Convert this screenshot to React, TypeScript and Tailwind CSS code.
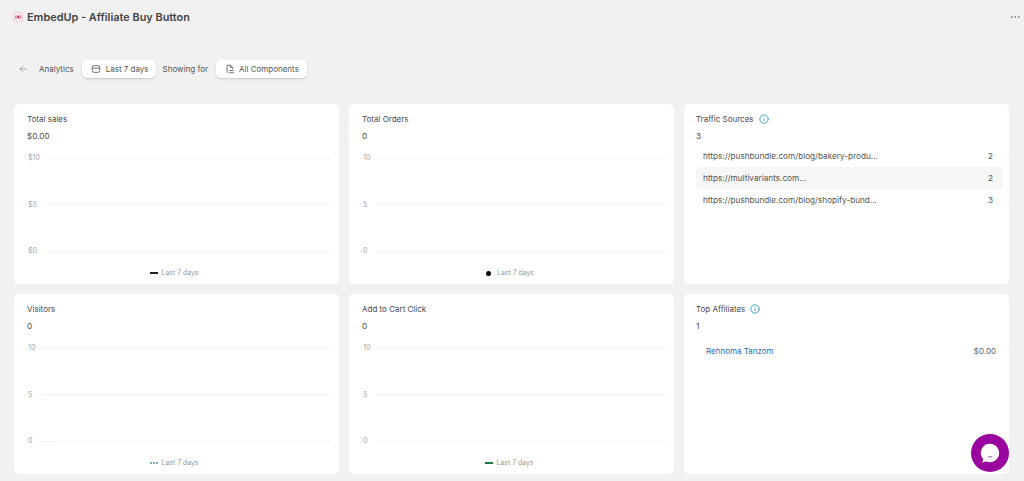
import { ArrowLeft, Info, MoreHorizontal } from 'lucide-react';

const font = { fontFamily: 'Inter, sans-serif' };

const ChartCard = ({
  title,
  value,
  ticks,
  legend,
  labelWidth,
}: {
  title: string;
  value: string;
  ticks: string[];
  legend: React.ReactNode;
  labelWidth: string;
}) => (
  <div className="bg-white rounded-[5px] h-[180px] pt-[9px] pl-[13px] pr-[6px]">
    <div className="text-[8px] leading-[12px] text-[#4a4a4a]">{title}</div>
    <div className="mt-[5px] text-[8.2px] leading-[12px] text-[#4a4a4a]">{value}</div>
    <div className="flex flex-col h-[105px] justify-between mt-[10px]">
      {ticks.map((t) => (
        <div key={t} className="flex items-center h-[12px] -ml-[2px]">
          <span className="w-[2px] h-px bg-[#eeeeee] mr-[1px]" />
          <span className={`text-[7.2px] leading-[12px] text-[#a8a8a8] ${labelWidth}`}>{t}</span>
          <span className="flex-1 h-px bg-[#f5f5f5] ml-[4px]" />
        </div>
      ))}
    </div>
    <div className="mt-[10px] pr-[12px] flex items-center justify-center gap-[4px] text-[6.9px] leading-[12px] text-[#9a9a9a]">
      {legend}
      <span>Last 7 days</span>
    </div>
  </div>
);

const InfoTitle = ({ title }: { title: string }) => (
  <div className="flex items-center gap-[5px] text-[8px] leading-[12px] text-[#4a4a4a]">
    {title}
    <Info className="w-[10px] h-[10px] text-[#2b9cc4]" strokeWidth={2.2} />
  </div>
);

const sources = [
  { url: 'https://pushbundle.com/blog/bakery-produ...', count: 2 },
  { url: 'https://multivariants.com...', count: 2, active: true },
  { url: 'https://pushbundle.com/blog/shopify-bund...', count: 3 },
];

export default function App() {
  return (
    <div className="w-[1024px] h-[481px] overflow-hidden bg-[#f1f1f1] flex flex-col relative" style={font}>
      <header className="h-[35px] shrink-0 border-b border-[#ececec] flex items-center justify-between pl-[13px] pr-[3px]">
        <div className="flex items-center gap-[4px]">
          <svg viewBox="0 0 10 10" className="w-[10px] h-[10px]" fill="none">
            <rect x="0.4" y="0.4" width="9.2" height="9.2" rx="1.5" fill="#fdeaee" stroke="#f6c9d2" strokeWidth="0.8" />
            <path d="M3.2 3Q2 5 3.2 7M6.8 3Q8 5 6.8 7" stroke="#d8345a" strokeWidth="0.8" />
            <circle cx="5" cy="5" r="1.2" fill="#d8345a" />
          </svg>
          <h1 className="text-[10.9px] leading-[14px] font-semibold text-[#444444]">EmbedUp - Affiliate Buy Button</h1>
        </div>
        <MoreHorizontal className="w-[12px] h-[12px] text-[#8a8a8a]" />
      </header>

      <div className="flex items-center h-[20px] mt-[24px] pl-[18px] text-[8px] text-[#555555]">
        <ArrowLeft className="w-[10px] h-[10px] text-[#9a9a9a]" />
        <span className="ml-[11px]">Analytics</span>
        <button className="ml-[8px] h-[18px] pl-[9px] pr-[7px] bg-white rounded-[5px] shadow-[0_1px_2px_rgba(0,0,0,0.18)] flex items-center gap-[5px] text-[8px] text-[#555555]">
          <svg viewBox="0 0 12 12" className="w-[10px] h-[10px]" fill="none" stroke="currentColor" strokeWidth="1">
            <rect x="1.5" y="2" width="9" height="8" rx="2" />
            <path d="M1.5 5H10.5" />
          </svg>
          Last 7 days
        </button>
        <span className="ml-[7px]">Showing for</span>
        <button className="ml-[8px] h-[18px] pl-[9px] pr-[8px] bg-white rounded-[5px] shadow-[0_1px_2px_rgba(0,0,0,0.18)] flex items-center gap-[4px] text-[8px] text-[#555555]">
          <svg viewBox="0 0 12 12" className="w-[10px] h-[10px]" fill="none" stroke="currentColor" strokeWidth="1">
            <path d="M2.5 10.5V1.5H6.5L9 4V6M6.5 1.5V4H9M5 8H10.5M5 10.5H10.5" />
          </svg>
          All Components
        </button>
      </div>

      <main className="grid grid-cols-[325px_325px_325px] grid-rows-[180px_180px] gap-[10px] mt-[25px] pl-[14px]">
        <ChartCard
          title="Total sales"
          value="$0.00"
          ticks={['$10', '$5', '$0']}
          labelWidth="w-[12px]"
          legend={<span className="w-[8px] h-[2px] bg-[#222222]" />}
        />
        <ChartCard
          title="Total Orders"
          value="0"
          ticks={['10', '5', '0']}
          labelWidth="w-[9px]"
          legend={<span className="w-[5px] h-[5px] rounded-full bg-black mx-[2px]" />}
        />
        <div className="bg-white rounded-[5px] h-[180px] pt-[9px] pl-[12px] pr-[6px]">
          <InfoTitle title="Traffic Sources" />
          <div className="mt-[5px] text-[8.2px] leading-[12px] text-[#4a4a4a]">3</div>
          <div className="mt-[3px]">
            {sources.map((s) => (
              <div
                key={s.url}
                className={`flex items-center justify-between h-[22px] pl-[7px] pr-[10px] rounded-[3px] text-[8.2px] text-[#555555] ${s.active ? 'bg-[#f6f6f6]' : ''}`}
              >
                <span>{s.url}</span>
                <span>{s.count}</span>
              </div>
            ))}
          </div>
        </div>

        <ChartCard
          title="Visitors"
          value="0"
          ticks={['10', '5', '0']}
          labelWidth="w-[9px]"
          legend={<span className="w-[8px] border-t-2 border-dotted border-[#7fb3ba]" />}
        />
        <ChartCard
          title="Add to Cart Click"
          value="0"
          ticks={['10', '5', '0']}
          labelWidth="w-[9px]"
          legend={<span className="w-[8px] h-[2px] bg-[#1f7a3d]" />}
        />
        <div className="bg-white rounded-[5px] h-[180px] pt-[9px] pl-[12px] pr-[13px]">
          <InfoTitle title="Top Affiliates" />
          <div className="mt-[5px] text-[8.2px] leading-[12px] text-[#4a4a4a]">1</div>
          <div className="mt-[8px] flex items-center justify-between h-[22px] pl-[10px] text-[8px]">
            <span className="text-[#2a6fb5]">Rehnoma Tanzom</span>
            <span className="text-[#5f5f5f]">$0.00</span>
          </div>
        </div>
      </main>

      <div className="absolute left-[971px] top-[434px] w-[38px] h-[38px] rounded-full bg-[#98069e] flex items-center justify-center">
        <svg viewBox="1 1 18 18" className="w-[22px] h-[22px]">
          <path d="M10 2.5a7.5 7.5 0 1 1-3.4 14.2L3.8 18l.6-3A7.5 7.5 0 0 1 10 2.5z" fill="#fff" />
          <path d="M8.2 12.6c1.2.5 2.8.5 4 0-.4 1.3-3.6 1.3-4 0z" fill="#6b0470" />
        </svg>
      </div>
    </div>
  );
}
